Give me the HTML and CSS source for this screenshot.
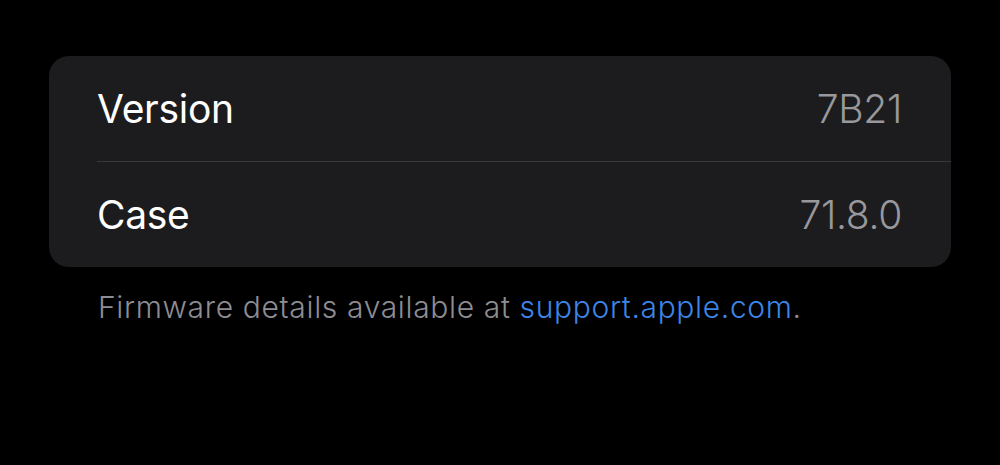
FILE: index.html
```html
<!DOCTYPE html>
<html lang="en">
<head>
<meta charset="utf-8">
<link rel="stylesheet" href="styles.css">
</head>
<body>
<main class="page">
  <section class="card">
    <div class="row">
      <span class="label">Version</span>
      <span class="value">7B21</span>
    </div>
    <div class="row">
      <span class="label">Case</span>
      <span class="value">71.8.0</span>
    </div>
  </section>
  <p class="footer">Firmware details available at <a class="link" href="#">support.apple.com</a>.</p>
</main>
</body>
</html>
```
FILE: styles.css
```css
html, body {
  margin: 0;
  padding: 0;
  background: #000;
}
body {
  width: 1000px;
  height: 465px;
  overflow: hidden;
  font-family: "Inter", "Roboto", "Liberation Sans", sans-serif;
}
.page {
  padding: 56px 49px 0 49px;
}
.card {
  background: #1c1c1e;
  border-radius: 20px;
  padding-left: 48px;
}
.row {
  display: flex;
  justify-content: space-between;
  align-items: center;
  height: 105px;
  padding-right: 49px;
  box-sizing: border-box;
}
.row + .row {
  border-top: 1px solid #38383a;
  height: 106px;
}
.label {
  color: #ffffff;
  font-size: 39px;
  letter-spacing: -0.3px;
}
.value {
  color: #98989d;
  font-size: 39px;
  font-weight: 350;
  letter-spacing: -0.3px;
}
.footer {
  margin: 22px 0 0 49px;
  color: #8d8d93;
  font-size: 30px;
  font-weight: 350;
  letter-spacing: 0.65px;
}
.link {
  color: #3d84e6;
  text-decoration: none;
}
```
